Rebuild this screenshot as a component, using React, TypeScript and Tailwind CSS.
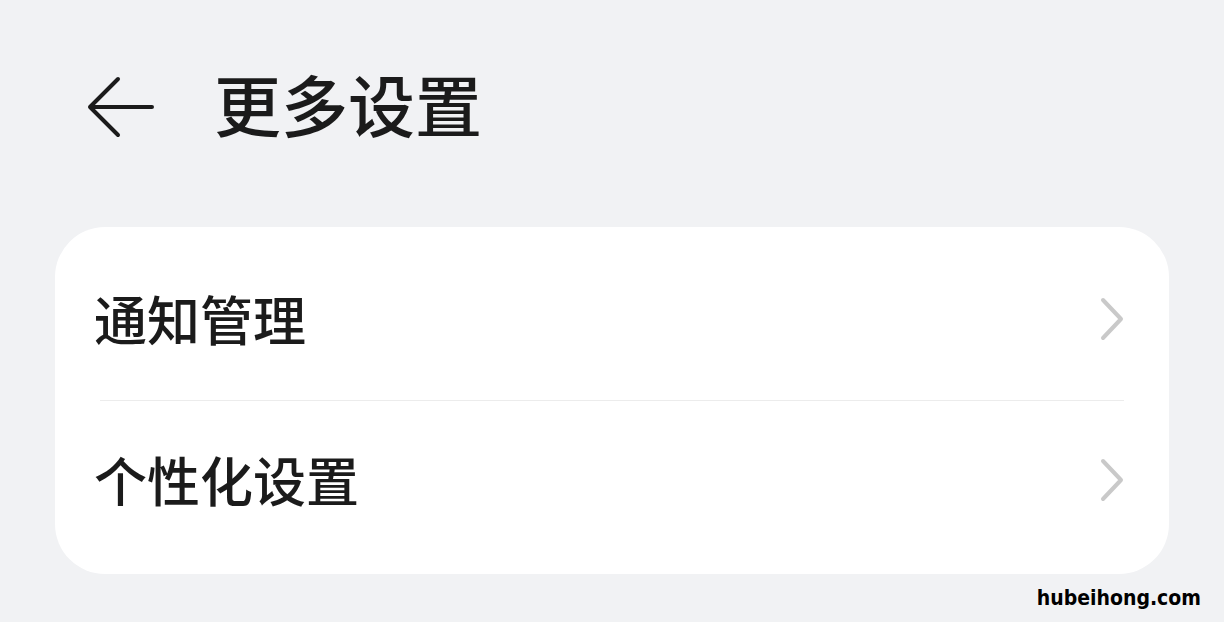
import React from "react";

const Chevron: React.FC = () => (
  <svg width="26" height="46" viewBox="0 0 26 46" fill="none">
    <path d="M4 4 L22 23 L4 42" stroke="#c9c9c9" strokeWidth="4" strokeLinecap="round" strokeLinejoin="round" />
  </svg>
);

const Row: React.FC<{ label: string; className: string }> = ({ label, className }) => (
  <div className={`flex h-[173px] items-center justify-between pl-[39px] pr-[44px] ${className}`}>
    <span className="text-[53px] font-medium leading-none text-[#1b1b1b]">{label}</span>
    <Chevron />
  </div>
);

export default function App() {
  return (
    <div
      className="relative h-[622px] w-[1224px] overflow-hidden bg-[#f1f2f4]"
      style={{ fontFamily: '"Noto Sans CJK SC", "Noto Sans", sans-serif' }}
    >
      <header className="flex h-[227px] items-start pl-[86px] pt-[74px]">
        <svg width="70" height="64" viewBox="0 0 70 64" fill="none" className="mt-[1px]">
          <path d="M32 4 L4 32 L32 60 M4 32 H66" stroke="#1b1b1b" strokeWidth="4" strokeLinecap="round" strokeLinejoin="round" />
        </svg>
        <h1 className="ml-[58px] -mt-[5px] text-[67px] font-medium leading-none text-[#1b1b1b]">更多设置</h1>
      </header>

      <div className="mx-[55px] rounded-[50px] bg-white">
        <Row label="通知管理" className="pt-[10px]" />
        <div className="mx-[45px] h-px bg-[#ececec]" />
        <Row label="个性化设置" className="pb-[16px]" />
      </div>

      <div
        className="absolute right-[23px] top-[583px] text-[21px] font-bold text-black"
        style={{ fontFamily: '"DejaVu Sans Condensed", "DejaVu Sans", sans-serif', fontStretch: "condensed" }}
      >
        hubeihong.com
      </div>
    </div>
  );
}
